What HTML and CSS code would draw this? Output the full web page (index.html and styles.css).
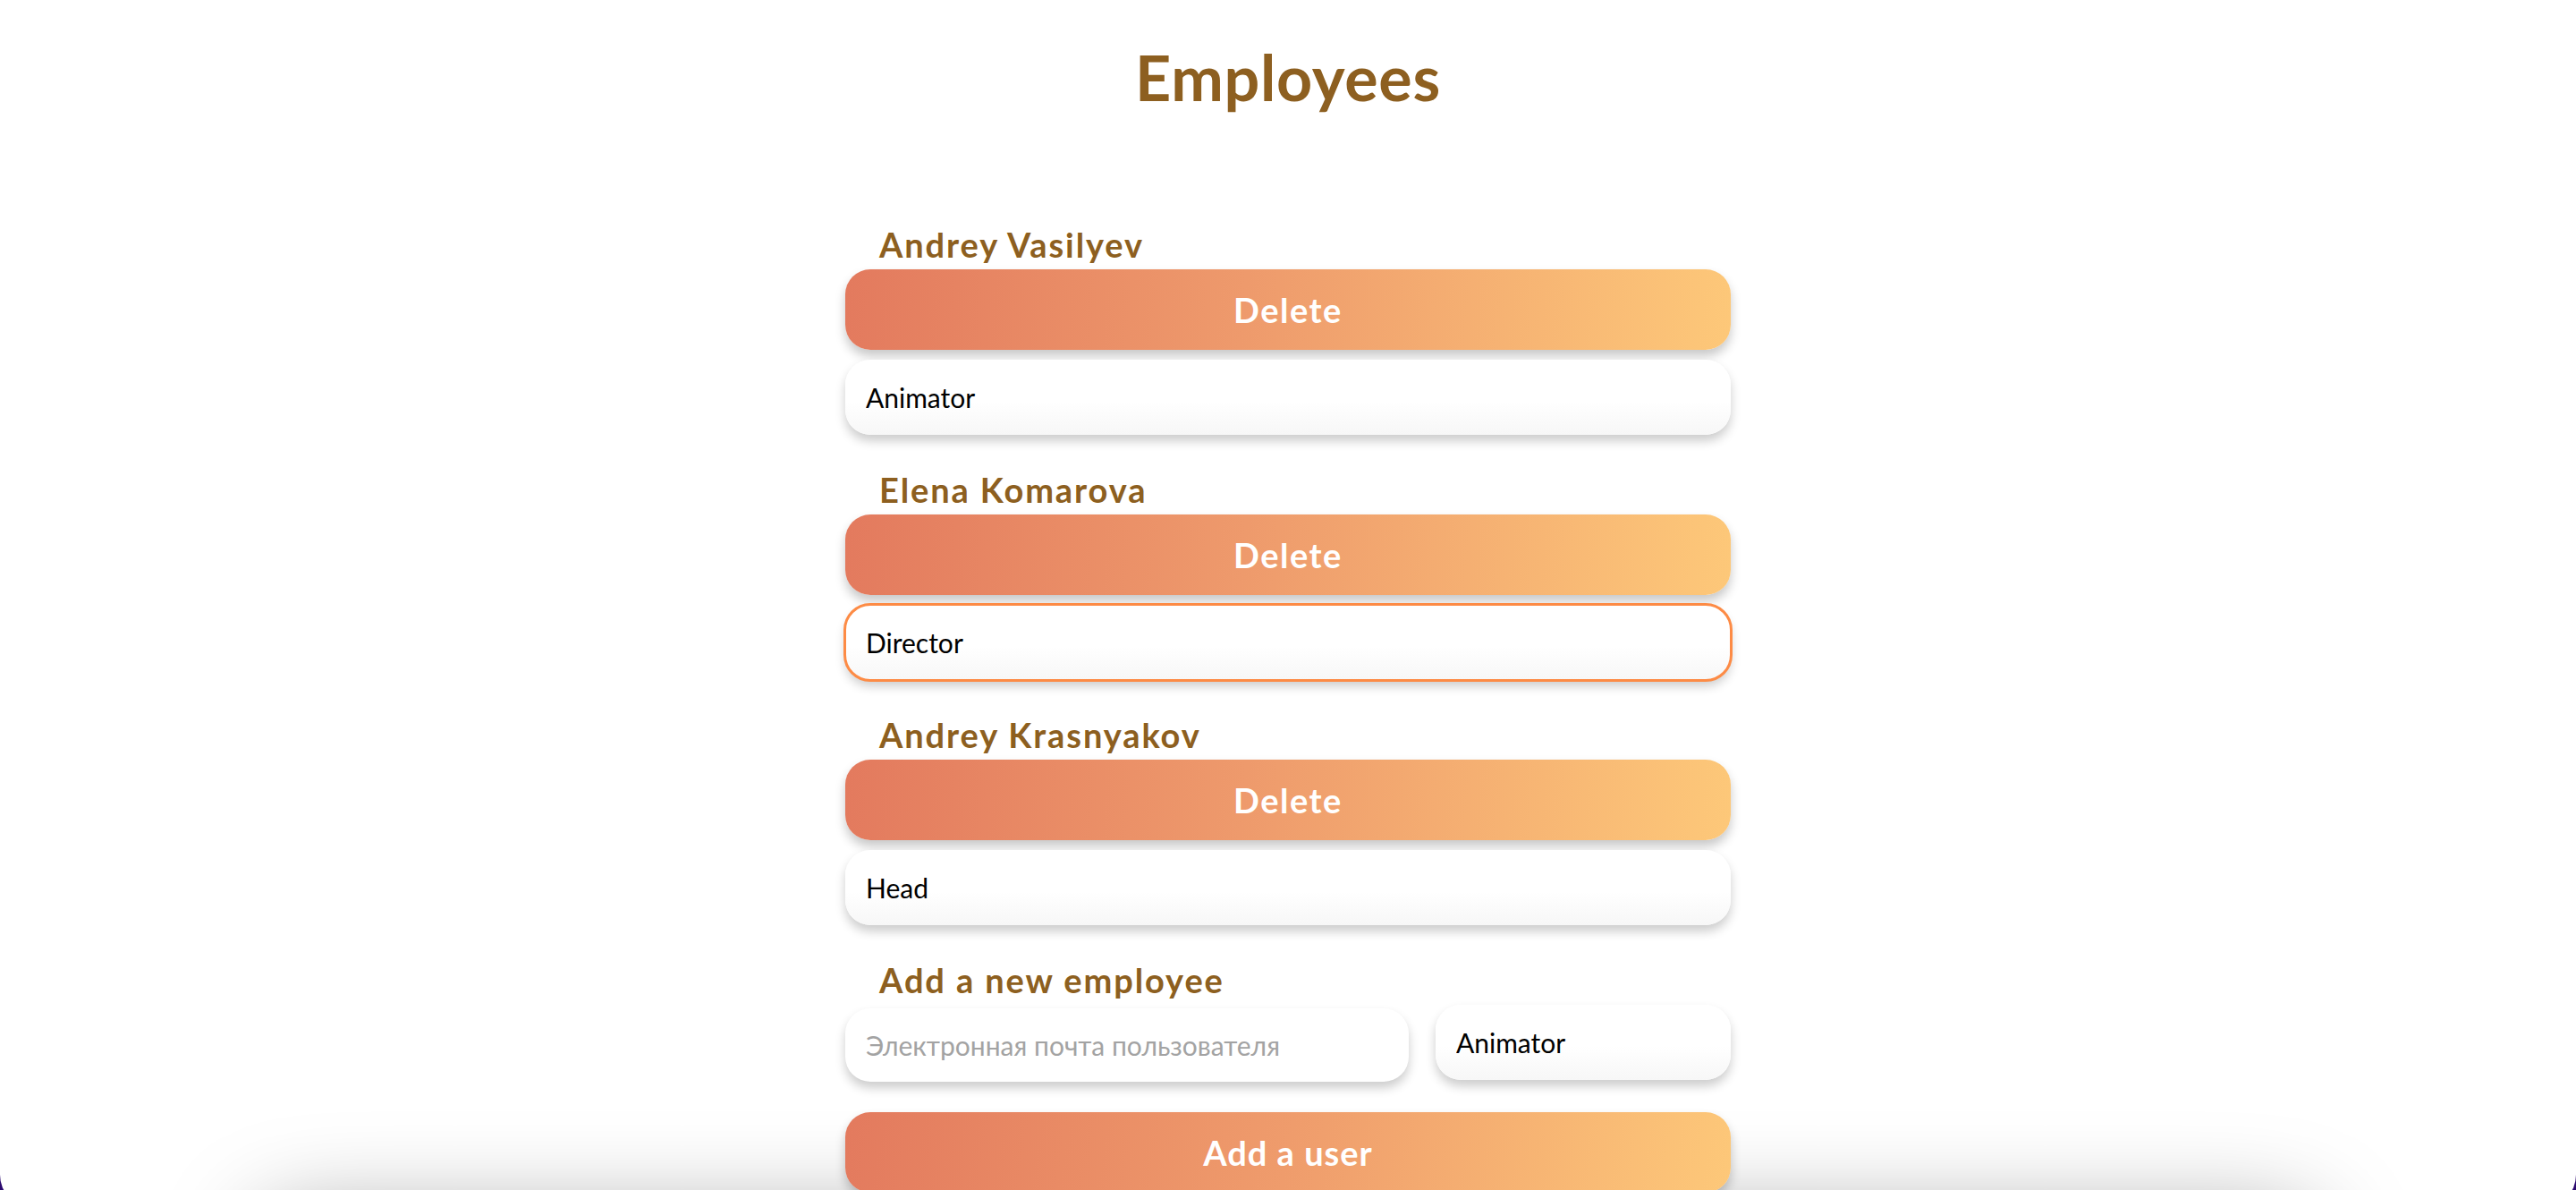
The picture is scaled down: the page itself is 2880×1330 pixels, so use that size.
FILE: index.html
```html
<!DOCTYPE html>
<html lang="en">
<head>
<meta charset="utf-8">
<title>Employees</title>
<link rel="stylesheet" href="styles.css">
</head>
<body>
<div class="page">
  <h1 class="title">Employees</h1>
  <main class="list">
    <section class="employee">
      <h3 class="name">Andrey Vasilyev</h3>
      <button class="btn">Delete</button>
      <input class="field" type="text" value="Animator">
    </section>
    <section class="employee">
      <h3 class="name">Elena Komarova</h3>
      <button class="btn">Delete</button>
      <input class="field focused" type="text" value="Director">
    </section>
    <section class="employee">
      <h3 class="name">Andrey Krasnyakov</h3>
      <button class="btn">Delete</button>
      <input class="field" type="text" value="Head">
    </section>
    <section class="add">
      <h3 class="name">Add a new employee</h3>
      <div class="add-row">
        <input class="field email" type="text" placeholder="Электронная почта пользователя">
        <select class="field role">
          <option>Animator</option>
          <option>Director</option>
          <option>Head</option>
        </select>
      </div>
      <button class="btn add-btn">Add a user</button>
    </section>
  </main>
</div>
<div class="footer-card"></div>
</body>
</html>
```

FILE: styles.css
```css
html, body {
  margin: 0;
  padding: 0;
}

body {
  background: #2d0b70;
  font-family: "Trebuchet MS", Lato, "Noto Sans", "DejaVu Sans", sans-serif;
}

.page {
  background: #ffffff;
  border-radius: 0 0 38px 38px;
  padding: 44px 0 18px;
}

.title {
  margin: 0;
  text-align: center;
  font-size: 70px;
  line-height: 84px;
  font-weight: 700;
  letter-spacing: 0.7px;
  color: #8d5f20;
}

.list {
  width: 990px;
  margin: 122px auto 0;
  display: flex;
  flex-direction: column;
  gap: 38px;
}

.employee {
  display: flex;
  flex-direction: column;
}

.name {
  margin: 0 0 5px 38px;
  font-size: 38px;
  line-height: 46px;
  font-weight: 700;
  letter-spacing: 1.9px;
  color: #8d5f20;
}

.btn {
  display: block;
  width: 100%;
  height: 90px;
  border: none;
  border-radius: 28px;
  background: linear-gradient(95deg, #e37a5e 0%, #ee9a6c 45%, #fdc879 100%);
  color: #ffffff;
  font-family: inherit;
  font-size: 38px;
  font-weight: 700;
  letter-spacing: 1.5px;
  box-shadow: 0 7px 12px rgba(0, 0, 0, 0.22);
  padding: 0;
}

.field {
  display: block;
  box-sizing: border-box;
  width: 100%;
  height: 84px;
  margin-top: 11px;
  border: none;
  border-radius: 28px;
  padding: 0 23px;
  background: linear-gradient(180deg, #ffffff 55%, #f7f7f7 100%);
  font-family: inherit;
  font-size: 30px;
  color: #000000;
  box-shadow: 0 7px 12px rgba(0, 0, 0, 0.2);
  outline: none;
}

.field.focused {
  outline: 3px solid #fd8b45;
  outline-offset: -1px;
}

.email::placeholder {
  color: #a3a3a3;
}

.add-row {
  display: flex;
  align-items: flex-start;
  gap: 30px;
  margin-top: 5px;
}

.add-row .field {
  margin-top: 0;
}

.add-row .email {
  width: 630px;
  height: 82px;
  margin-top: 4px;
  background: #ffffff;
}

.role {
  width: 330px;
  appearance: none;
  -webkit-appearance: none;
}

.add-btn {
  margin-top: 34px;
  letter-spacing: 1px;
  background: linear-gradient(100deg, #e37a5e 0%, #ef9c6c 50%, #fdc879 100%);
}

.footer-card {
  width: 2300px;
  height: 300px;
  margin: 12px auto 0;
  background: #ffffff;
  border-radius: 40px;
  box-shadow: 0 0 110px rgba(0, 0, 0, 0.4);
}
```
